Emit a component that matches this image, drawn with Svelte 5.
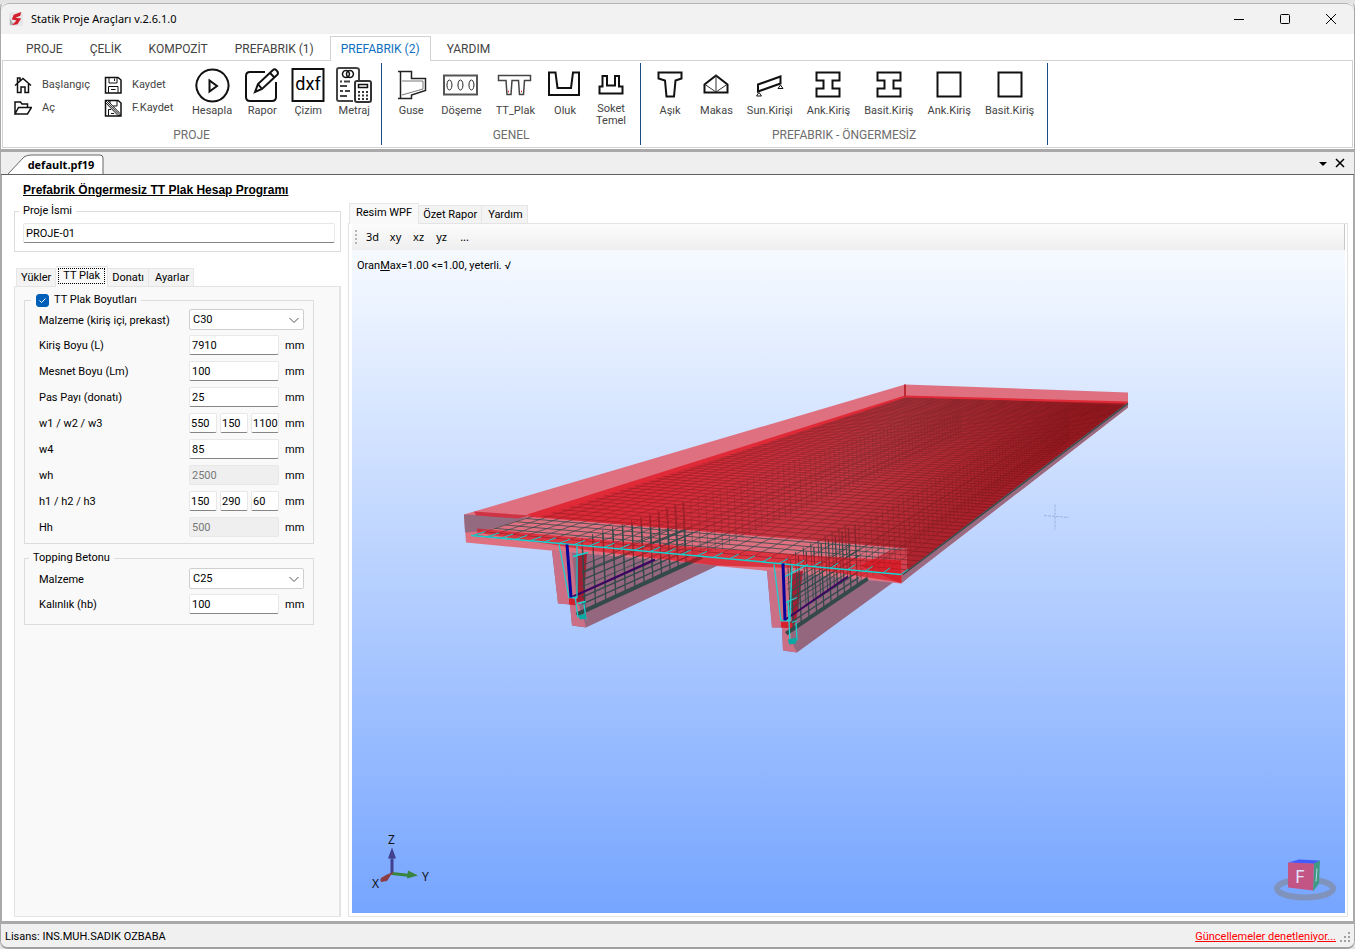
<script lang="ts">
  type Shape = { d: string; width?: number; color?: string; fill?: string };
  type Tool = { label: string; art: Shape[]; text?: string };
  type Point = [number, number];

  const beam = 'M6.5 5.5H29.5V13.5H22.5V21.5H29.5V29.5H6.5V21.5H13.5V13.5H6.5Z';
  const square = 'M6.5 5.5H29.5V29.5H6.5Z';

  const tabs = ['PROJE', 'ÇELİK', 'KOMPOZİT', 'PREFABRIK (1)', 'PREFABRIK (2)', 'YARDIM'];
  let activeTab = $state('PREFABRIK (2)');

  const fileTools: { label: string; art: Shape[] }[] = [
    {
      label: 'Başlangıç',
      art: [{ d: 'M1 9.5L9 2.5L17 9.5M3.5 8V16.5H7V11H11V16.5H14.5V8M3.5 7V2H6V4.5' }],
    },
    {
      label: 'Kaydet',
      art: [
        { d: 'M1.5 1.5H14L17 4V17H1.5Z' },
        { d: 'M5 1V7H13V1M10.5 2.5V5M4.5 17V10.5H14V17M7 13.5H11.5', width: 1 },
      ],
    },
    { label: 'Aç', art: [{ d: 'M1 15V3H6.5L8 5H13.5V8M1 15L4.5 8.5H17.5L13.5 15Z' }] },
    {
      label: 'F.Kaydet',
      art: [
        { d: 'M1.5 1.5H14L17 4V17H1.5Z' },
        { d: 'M6 1V5M13 1V7H9M4.5 17V10.5H7M14 12V17M7 14.5H10', width: 1 },
        { d: 'M1 3L3 1L16 14.5V16.5H14Z', width: 1, fill: '#fff' },
        { d: 'M2 2L15 15.5', width: 1 },
      ],
    },
  ];

  const groups: { name: string; tools: Tool[] }[] = [
    {
      name: 'PROJE',
      tools: [
        {
          label: 'Hesapla',
          art: [
            { d: 'M18.5 2.5A16 16 0 1 1 18.4 2.5Z', width: 2 },
            { d: 'M15.5 13.5V24.5L23 19Z', width: 2 },
          ],
        },
        {
          label: 'Rapor',
          art: [
            { d: 'M21 5H6Q2 5 2 9V30Q2 34 6 34H28Q32 34 32 30V15', width: 2 },
            { d: 'M11 25L14 17L29 3Q31 1 33 4Q35 6 33 8L18 22ZM14 17L18 22M26 6L30 10', width: 2 },
          ],
        },
        { label: 'Çizim', art: [{ d: 'M2.5 2H33.5V34H2.5Z', width: 2 }], text: 'dxf' },
        {
          label: 'Metraj',
          art: [
            { d: 'M17 34H3Q1 34 1 32V3Q1 1 3 1H20Q23 1 23 3V13', width: 2, color: '#444' },
            { d: 'M10 3.5A3.5 3.5 0 1 1 9.9 3.5M14 3.5A3.5 3.5 0 1 1 13.9 3.5', width: 1.5 },
            { d: 'M4 14.5H6M8 14.5H14M4 19H11M4 24H7M9 24H14M4 29H11', width: 2, color: '#444' },
            { d: 'M21 14H33Q35 14 35 16V33Q35 35 33 35H21Q19 35 19 33V16Q19 14 21 14Z', width: 2, color: '#333', fill: '#fff' },
            { d: 'M22.5 17.5H31.5V20.5H22.5Z', width: 1.5 },
            { d: 'M22 25H24M26 25H28M30 25H32M22 28.5H24M26 28.5H28M30 28.5H32M22 32H24M26 32H28M30 32H32', width: 2, color: '#333' },
          ],
        },
      ],
    },
    {
      name: 'GENEL',
      tools: [
        {
          label: 'Guse',
          art: [
            { d: 'M5 4.5H18.5V11.5H32.5V23.5L18.5 28V31.5H5M7.5 4.5V31.5', color: '#222' },
            { d: 'M9 14H30V22L9 28', width: 1, color: '#777' },
          ],
        },
        {
          label: 'Döşeme',
          art: [
            { d: 'M1 8.5H34V27.5H1Z', width: 2, color: '#555' },
            { d: 'M6.5 13A2.5 5 0 1 1 6.4 13M17.5 13A2.5 5 0 1 1 17.4 13M28.5 13A2.5 5 0 1 1 28.4 13', width: 1, color: '#222' },
          ],
        },
        {
          label: 'TT_Plak',
          art: [
            { d: 'M1.5 8.5H33.5V13.5H27.5L26.5 27.5H22.5L21.5 13.5H15L14 27.5H10L9 13.5H1.5Z', color: '#444' },
            { d: 'M11 24.5H12M24 24.5H25', color: '#e22' },
          ],
        },
        { label: 'Oluk', art: [{ d: 'M2 5.5H8.5L10.5 21H24L26 5.5H32V28H2Z', width: 2 }] },
        {
          label: 'Soket\nTemel',
          art: [{ d: 'M6.5 26.5V19.5H9.5V9H14V18.5H22V9H26V19.5H29.5V26.5Z', width: 2 }],
        },
      ],
    },
    {
      name: 'PREFABRIK - ÖNGERMESİZ',
      tools: [
        { label: 'Aşık', art: [{ d: 'M6.5 5.5H29.5V11.5L23.5 13.5L22 29.5H14.5L13 13.5L6.5 11.5Z', width: 2 }] },
        {
          label: 'Makas',
          art: [
            { d: 'M6.5 25.5V17.5L18 8.5L29.5 17.5V25.5Z', width: 2 },
            { d: 'M18 8V25M7 17.5L18 25L29 17.5', width: 1, color: '#333' },
          ],
        },
        {
          label: 'Sun.Kirişi',
          art: [
            { d: 'M6 17.5L28.5 9.5V16.5L6 24.5Z', width: 2 },
            { d: 'M7 25.5L4.5 29H9.5ZM28.5 18L26 21.5H31Z', width: 1 },
          ],
        },
        { label: 'Ank.Kiriş', art: [{ d: beam, width: 2 }] },
        { label: 'Basit.Kiriş', art: [{ d: beam, width: 2 }] },
        { label: 'Ank.Kiriş', art: [{ d: square, width: 2 }] },
        { label: 'Basit.Kiriş', art: [{ d: square, width: 2 }] },
      ],
    },
  ];

  const sizeRows = $state([
    { label: 'Kiriş Boyu (L)', values: ['7910'], disabled: false },
    { label: 'Mesnet Boyu (Lm)', values: ['100'], disabled: false },
    { label: 'Pas Payı (donatı)', values: ['25'], disabled: false },
    { label: 'w1 / w2 / w3', values: ['550', '150', '1100'], disabled: false },
    { label: 'w4', values: ['85'], disabled: false },
    { label: 'wh', values: ['2500'], disabled: true },
    { label: 'h1 / h2 / h3', values: ['150', '290', '60'], disabled: false },
    { label: 'Hh', values: ['500'], disabled: true },
  ]);

  let projectName = $state('PROJE-01');
  let sizesEnabled = $state(true);
  let toppingThickness = $state('100');

  // Perspective mapping of the unit square onto the reinforcement plane.
  const corners: Point[] = [[473, 535], [901, 574], [1126, 405], [906, 396]];

  function perspective([a, b, c, d]: Point[]) {
    const sx = a[0] - b[0] + c[0] - d[0];
    const sy = a[1] - b[1] + c[1] - d[1];
    const dx1 = b[0] - c[0];
    const dx2 = d[0] - c[0];
    const dy1 = b[1] - c[1];
    const dy2 = d[1] - c[1];
    const det = dx1 * dy2 - dx2 * dy1;
    const g = (sx * dy2 - dx2 * sy) / det;
    const h = (dx1 * sy - sx * dy1) / det;

    return (u: number, v: number) => {
      const w = g * u + h * v + 1;
      return {
        x: ((b[0] - a[0] + g * b[0]) * u + (d[0] - a[0] + h * d[0]) * v + a[0]) / w,
        y: ((b[1] - a[1] + g * b[1]) * u + (d[1] - a[1] + h * d[1]) * v + a[1]) / w,
        scale: 1 / (1 + 0.92 * v),
      };
    };
  }

  const project = perspective(corners);

  function line(u1: number, v1: number, u2: number, v2: number, drop = 0) {
    const p = project(u1, v1);
    const q = project(u2, v2);
    return `M${p.x.toFixed(1)} ${(p.y + drop * p.scale).toFixed(1)}L${q.x.toFixed(1)} ${(q.y + drop * q.scale).toFixed(1)}`;
  }

  const across = Array.from({ length: 80 }, (_, i) => line(0, i / 79, 1, i / 79)).join('');
  const along = Array.from({ length: 28 }, (_, i) => line(i / 27, 0, i / 27, 1)).join('');

  function stirrups(u: number, drop: number, from: number, to: number, step: number) {
    let path = '';
    for (let v = from; v <= to; v += step) {
      const p = project(u, v);
      path += `M${p.x.toFixed(1)} ${p.y.toFixed(1)}l${(3 * p.scale).toFixed(1)} ${(drop * p.scale).toFixed(1)}`;
    }
    for (const part of [0.45, 0.55, 0.8, 0.9]) {
      path += line(u, from, u, to, drop * part);
    }
    return path;
  }

  // Close stirrups are drawn heavier than those that fade out under the deck.
  const ribs = [
    { u: 0.26, near: 0.17 },
    { u: 0.752, near: 0.14 },
  ].map(({ u, near }) => ({
    near: stirrups(u, 70, 0.01, near, 0.0135),
    inner: stirrups(u - 0.02, 62, 0.02, near, 0.0135),
    far: stirrups(u, 70, near, 1, 0.0135),
    bar: line(u, 0.003, u, near + 0.02, 71),
  }));

  // Short ticks where the lengthwise bars pass the first crosswise bar.
  const ticks = Array.from({ length: 28 }, (_, i) => line(i / 27, 0, i / 27, 0.014)).join('');
</script>

{#snippet strokes(shapes: Shape[])}
  {#each shapes as shape}
    <path d={shape.d} fill={shape.fill ?? 'none'} stroke={shape.color ?? '#111'} stroke-width={shape.width ?? 1.5} />
  {/each}
{/snippet}

<div class="window">
  <header class="title-bar">
    <svg class="logo" viewBox="0 0 16 18" aria-hidden="true">
      <rect x="0" y="1" width="15" height="15" rx="3" fill="#e6e6e8" />
      <path d="M1 8L5 14L1 15Z" fill="#aaa" />
      <path d="M13 1L5 4L3 9L8 10L3 15L9 14L13 8L7 7L12 5Z" fill="#d3202c" />
    </svg>
    <h1>Statik Proje Araçları v.2.6.1.0</h1>
    <div class="window-buttons">
      <button type="button" aria-label="Minimize"><svg viewBox="0 0 12 12"><path d="M1 6.5H11" /></svg></button>
      <button type="button" aria-label="Maximize"><svg viewBox="0 0 12 12"><rect x="1.5" y="1.5" width="9" height="9" rx="1" /></svg></button>
      <button type="button" aria-label="Close"><svg viewBox="0 0 12 12"><path d="M1 1L11 11M11 1L1 11" /></svg></button>
    </div>
  </header>

  <nav class="ribbon-tabs">
    {#each tabs as tab}
      <button type="button" class:active={tab === activeTab} onclick={() => (activeTab = tab)}>{tab}</button>
    {/each}
  </nav>

  <div class="ribbon">
    {#each groups as group, index}
      <section class="group">
        <div class="tools">
          {#if index === 0}
            <div class="file-tools">
              {#each fileTools as tool}
                <button type="button">
                  <svg viewBox="0 0 18 18" aria-hidden="true">{@render strokes(tool.art)}</svg>
                  <span>{tool.label}</span>
                </button>
              {/each}
            </div>
          {/if}
          {#each group.tools as tool}
            <button type="button" class="tool">
              <svg class="tool-icon" viewBox="0 0 36 36" aria-hidden="true">
                {@render strokes(tool.art)}
                {#if tool.text}
                  <text x="18" y="23" text-anchor="middle" font-size="18">{tool.text}</text>
                {/if}
              </svg>
              <span class:double={tool.label.includes('\n')}>{tool.label}</span>
            </button>
          {/each}
        </div>
        <p>{group.name}</p>
      </section>
    {/each}
  </div>

  <div class="document-bar">
    <button type="button" class="document-tab">
      <svg viewBox="0 0 98 20" aria-hidden="true"><path d="M0 20L16 3Q19 1 23 1H92Q95 1 95 4V20" /></svg>
      <span>default.pf19</span>
    </button>
    <div class="document-buttons">
      <button type="button" aria-label="Open documents"><svg viewBox="0 0 10 10"><path d="M1 4H9L5 8Z" fill="#000" stroke="none" /></svg></button>
      <button type="button" aria-label="Close document"><svg viewBox="0 0 10 10"><path d="M1 1L9 9M9 1L1 9" /></svg></button>
    </div>
  </div>

  <main>
    <aside>
      <h2>Prefabrik Öngermesiz TT Plak Hesap Programı</h2>
      <fieldset class="project">
        <legend><label for="project-name">Proje İsmi</label></legend>
        <input id="project-name" type="text" bind:value={projectName} />
      </fieldset>

      <div class="page-tabs">
        <button type="button">Yükler</button>
        <button type="button" class="active focused"><span>TT Plak</span></button>
        <button type="button">Donatı</button>
        <button type="button">Ayarlar</button>
      </div>
      <div class="page">
        <fieldset class="sizes">
          <legend>
            <label class="check"><input type="checkbox" bind:checked={sizesEnabled} />
              <svg viewBox="0 0 13 13" aria-hidden="true"><path d="M3.5 6.5L5.5 8.5L9.5 4.5" /></svg>TT Plak Boyutları</label>
          </legend>
          <div class="row">
            <label for="material">Malzeme (kiriş içi, prekast)</label>
            <div class="select">
              <select id="material"><option>C30</option><option>C35</option></select>
              <svg viewBox="0 0 12 12" aria-hidden="true"><path d="M1.5 4L6 8.5L10.5 4" /></svg>
            </div>
          </div>
          {#each sizeRows as row, i}
            <div class="row">
              <label for={`size-${i}-0`}>{row.label}</label>
              <div class="fields" class:split={row.values.length > 1}>
                {#each row.values as _, j}
                  <input id={`size-${i}-${j}`} type="text" aria-label={row.label} disabled={row.disabled} bind:value={row.values[j]} />
                {/each}
              </div>
              <span>mm</span>
            </div>
          {/each}
        </fieldset>

        <fieldset class="topping">
          <legend>Topping Betonu</legend>
          <div class="row">
            <label for="topping-material">Malzeme</label>
            <div class="select">
              <select id="topping-material"><option>C25</option><option>C30</option></select>
              <svg viewBox="0 0 12 12" aria-hidden="true"><path d="M1.5 4L6 8.5L10.5 4" /></svg>
            </div>
          </div>
          <div class="row">
            <label for="topping-thickness">Kalınlık (hb)</label>
            <div class="fields"><input id="topping-thickness" type="text" bind:value={toppingThickness} /></div>
            <span>mm</span>
          </div>
        </fieldset>
      </div>
    </aside>

    <section class="preview">
      <div class="page-tabs">
        <button type="button" class="active">Resim WPF</button>
        <button type="button">Özet Rapor</button>
        <button type="button">Yardım</button>
      </div>
      <div class="preview-page">
        <div class="view-tools">
          <span class="grip" aria-hidden="true"></span>
          {#each ['3d', 'xy', 'xz', 'yz', '...'] as view}
            <button type="button">{view}</button>
          {/each}
        </div>
        <div class="viewport">
          <p>Oran<u>M</u>ax=1.00 &lt;=1.00, yeterli. √</p>
          <svg class="scene" viewBox="352 250 993 662" preserveAspectRatio="xMidYMid meet" aria-label="TT plak">
            <defs>
              <linearGradient id="deck" gradientUnits="userSpaceOnUse" x1="700" y1="430" x2="930" y2="610">
                <stop offset="0" stop-color="#d80a16" stop-opacity="0.68" />
                <stop offset="0.5" stop-color="#b81620" stop-opacity="0.64" />
                <stop offset="1" stop-color="#94070e" stop-opacity="0.8" />
              </linearGradient>
            </defs>

            <!-- concrete shell -->
            <path d="M464 514L905 384L1128 392V407L907 578L901 583L466 542Z" fill="#de7080" />
            <path d="M464 514L527 517L500 526L478 531L465 532Z" fill="#936a80" />
            <path d="M474 511L530 515L518 518L476 515Z" fill="#cf3444" />
            <path d="M552 550L558 603L570 604L572 625L586 627L718 565ZM767 570L772 627L782 627L783 650L797 652L893 582Z" fill="#94677f" />
            <path d="M552 550L558 603L570 604L572 625L586 627L583 616L577 600L572 552ZM767 570L772 627L782 627L783 650L797 652L791 640L790 572Z" fill="#cb6f87" />
            <path d="M576 555L587 552L584 600L577 602ZM791 574L803 570L796 622L792 627Z" fill="#a01f32" />
            <path d="M569 597L577 599L576 605L569 604ZM781 621L795 622L792 628L781 627Z" fill="#d4202f" />

            <!-- reinforcement -->
            <g fill="none" stroke="#33494a">
              <path d={across} stroke-width="0.8" />
              <path d={along} stroke-width="0.7" />
              {#each ribs as rib}
                <path d={rib.near} stroke-width="1.3" />
                <path d={rib.inner} stroke-width="0.9" />
                <path d={rib.far} stroke-width="0.7" stroke-opacity="0.75" />
                <path d={rib.bar} stroke-width="4" />
              {/each}
            </g>
            <path d="M571 597L655 559M784 620L848 576" stroke="#3d0462" stroke-width="2" />

            <!-- deck faces -->
            <path d="M527 516L905 396L1128 402L907 573V548Z" fill="url(#deck)" />
            <path d="M907 548L890 550L860 565L901 583L907 578Z" fill="#c8101c" fill-opacity="0.5" />
            <path d="M527 514L905 395L1128 401V403L905 397L537 517Z" fill="#e12a37" />
            <path d="M477 528L620 541L810 555L901 560V582L810 568L716 565L590 550L477 532Z" fill="#dc0c18" fill-opacity="0.6" />
            <path d="M901 583L907 578L1128 407V402L903 573Z" fill="#996a80" />
            <path d="M903 574L1128 403" stroke="#344b4a" stroke-width="1.5" />
            <path d="M905 384V396" stroke="#bd2836" stroke-width="2" />

            <!-- front bars -->
            <g fill="none" stroke="#18d2d0">
              <path d="M471 535L901 574" stroke-width="1.5" />
              <path d={ticks} stroke-width="1" />
              <path
                d="M559 544L569 597L577 597L577 545M575 596L578 617M584 603L586 619M573 556L588 552M578 603L586 601M774 564L781 620L790 620L792 565M788 600L790 642M796 622L797 640M785 576L808 564M786 602L797 597M792 622L797 620"
                stroke-width="1.3"
              />
            </g>
            <path d="M567 544L571 597M783 563L785 620" stroke="#09039b" stroke-width="3" />
            <path d="M578 615L586 613L586 618L580 619ZM788 639L797 637L796 643L789 644Z" fill="#0aa8a5" />

            <path d="M1044 515L1069 517M1055 504V529" stroke="#9fb2dc" stroke-width="1" stroke-dasharray="3 1" />

            <!-- axes -->
            <path d="M392 874V858" stroke="#423f8c" stroke-width="3" />
            <path d="M392 847L396 858H388Z" fill="#423f8c" />
            <path d="M392 873L410 875" stroke="#39843f" stroke-width="3" />
            <path d="M408 870L418 875L407 878Z" fill="#39843f" />
            <path d="M393 872L386 875L381 878V881L387 880L390 875Z" fill="#8c3d42" stroke="#8c3d42" />
            <g class="axis-names">
              <text x="388" y="843">Z</text>
              <text x="372" y="887">X</text>
              <text x="422" y="880">Y</text>
            </g>

            <!-- view cube -->
            <ellipse cx="1305" cy="888" rx="28" ry="9" fill="none" stroke="#7f93bd" stroke-width="6" />
            <path d="M1288 862L1299 859L1320 860L1314 863.5Z" fill="#405cff" />
            <path d="M1314 863L1320 860L1319 883L1313 891Z" fill="#409984" />
            <path d="M1288 862L1314 863L1313 890L1288 887Z" fill="#c25584" />
            <path d="M1317 868L1316 881" stroke="#b4d6e2" />
            <text class="cube-face" x="1295" y="882">F</text>
          </svg>
        </div>
      </div>
    </section>
  </main>

  <footer>
    <span>Lisans: INS.MUH.SADIK OZBABA</span>
    <a href="#updates">Güncellemeler denetleniyor...</a>
    <svg viewBox="0 0 12 12" aria-hidden="true"><path d="M9 1h2M5 5h2M9 5h2M1 9h2M5 9h2M9 9h2" /></svg>
  </footer>
</div>

<style>
  :global(body) {
    margin: 0;
    background: #e3e3e3;
  }

  .window {
    display: flex;
    flex-direction: column;
    box-sizing: border-box;
    min-height: 100vh;
    border: 1px solid #a9a9a9;
    border-top: 3px solid #e3e3e3;
    border-bottom: 2px solid #a0a0a0;
    border-radius: 8px;
    background: #fff;
    color: #000;
    font: 11px/14px Roboto, 'Liberation Sans', sans-serif;
    overflow: hidden;
  }

  button {
    border: 0;
    padding: 0;
    background: transparent;
    color: inherit;
    font: inherit;
  }

  h1,
  h2,
  p {
    margin: 0;
    font: inherit;
  }

  input,
  select {
    box-sizing: border-box;
    font: inherit;
    color: #000;
  }

  .title-bar {
    display: flex;
    align-items: center;
    height: 31px;
    border-top: 1px solid #b4b4b4;
    border-radius: 8px 8px 0 0;
    box-sizing: border-box;
    padding-left: 8px;
    background: #f2f2f2;
  }

  .logo {
    width: 15px;
    height: 17px;
    margin-right: 7px;
  }

  .title-bar h1 {
    flex: 1;
    font-family: 'Noto Sans', sans-serif;
    font-size: 11px;
  }

  .window-buttons {
    display: flex;
  }

  .window-buttons button {
    display: grid;
    place-items: center;
    width: 46px;
    height: 30px;
  }

  .window-buttons svg {
    width: 12px;
    height: 12px;
    fill: none;
    stroke: #000;
  }

  .ribbon-tabs {
    display: flex;
    gap: 5px;
    height: 26px;
    padding-left: 14px;
    font-size: 12px;
    color: #444;
  }

  .ribbon-tabs button {
    padding: 2px 10px 0;
    border: 1px solid transparent;
    border-bottom: 0;
  }

  .ribbon-tabs .active {
    position: relative;
    z-index: 1;
    margin: 2px 0 -1px;
    padding-top: 0;
    border-color: #d2d2d2;
    background: #fff;
    color: #0f6fc0;
  }

  .ribbon {
    display: flex;
    margin: 0 1px;
    border: 1px solid #d2d2d2;
    padding: 2px 0;
    color: #444;
  }

  .group {
    display: flex;
    flex-direction: column;
    align-items: center;
    border-right: 1px solid #1e4a86;
    padding: 4px 4px 2px 3px;
  }

  .group + .group {
    padding: 4px 6px 2px;
  }

  .group p {
    color: #6d6d6d;
    font-size: 12px;
    line-height: 16px;
  }

  .tools {
    display: flex;
    flex: 1;
    height: 59px;
  }

  .file-tools {
    display: grid;
    grid-template-columns: 90px 82px;
    grid-template-rows: 23px 23px;
    padding: 6px 0 0 8px;
  }

  .file-tools button {
    display: flex;
    align-items: center;
    gap: 10px;
  }

  .file-tools svg {
    width: 18px;
    height: 18px;
  }

  .tool {
    display: flex;
    flex-direction: column;
    align-items: center;
    padding: 0 5px;
  }

  .file-tools + .tool {
    padding-left: 4px;
  }

  .tool-icon {
    width: 36px;
    height: 36px;
    flex: none;
  }

  .tool span {
    padding: 0 2px;
    line-height: 16px;
    white-space: pre-line;
  }

  .tool .double {
    line-height: 12px;
  }

  .document-bar {
    display: flex;
    justify-content: space-between;
    height: 22px;
    border-top: 3px solid #a9a9a9;
    border-bottom: 1px solid #606060;
    margin-top: 1px;
    padding: 0 9px 0 7px;
    background: #efefef;
  }

  .document-tab {
    position: relative;
    width: 98px;
    margin: 2px 0 -1px;
    padding-left: 8px;
    font: bold 11px/18px 'Open Sans', sans-serif;
  }

  .document-tab svg {
    position: absolute;
    inset: 0;
    fill: #fff;
    stroke: #666;
  }

  .document-tab span {
    position: relative;
  }

  .document-buttons {
    display: flex;
    gap: 7px;
  }

  .document-buttons svg {
    display: block;
    width: 10px;
    height: 10px;
    stroke: #000;
    stroke-width: 1.5;
  }

  main {
    display: flex;
    flex: 1;
    gap: 7px;
    padding: 8px 5px 4px 12px;
    border: solid #a9a9a9;
    border-width: 0 1px 3px 1px;
  }

  aside {
    display: flex;
    flex-direction: column;
    flex: 0 0 327px;
  }

  h2 {
    padding-left: 9px;
    font-family: 'Liberation Sans', sans-serif;
    font-size: 12px;
    font-weight: bold;
    text-decoration: underline;
    white-space: nowrap;
  }

  fieldset {
    min-width: 0;
    margin: 0;
    border: 1px solid #dcdcdc;
  }

  legend {
    margin-left: -4px;
    padding: 0 4px;
    line-height: 14px;
  }

  .project {
    margin-top: 7px;
    padding: 5px 5px 8px 8px;
  }

  .project input {
    width: 100%;
  }

  input[type='text'] {
    min-width: 0;
    height: 20px;
    border: 1px solid #e8e8e8;
    border-bottom-color: #858585;
    border-radius: 2px;
    padding: 0 2px;
    background: #fff;
  }

  input[type='text']:disabled {
    border-color: #e8e8e8;
    background: #efefef;
    color: #777;
  }

  .page-tabs {
    display: flex;
    align-items: flex-end;
    height: 20px;
    padding-left: 1px;
  }

  aside .page-tabs {
    margin-top: 14px;
    padding-left: 2px;
  }

  .page-tabs button {
    height: 18px;
    border: 1px solid #e6e6e6;
    border-bottom: 0;
    padding: 0 4px;
    background: #f3f3f3;
  }

  .page-tabs button + button {
    border-left: 0;
  }

  .page-tabs button:last-child {
    padding-left: 6px;
  }

  .page-tabs .active {
    position: relative;
    z-index: 1;
    height: 21px;
    margin-bottom: -1px;
    padding: 0 6px 3px;
    background: #f9f9f9;
  }

  .page-tabs .focused {
    padding: 0 2px 3px;
  }

  .focused span {
    display: block;
    border: 1px dotted #000;
    padding: 0 4px;
  }

  .page {
    flex: 1;
    border: 1px solid #e4e4e4;
    border-right-width: 2px;
    padding: 6px 25px 6px 9px;
    background: #f9f9f9;
  }

  .sizes {
    display: grid;
    gap: 6px;
    padding: 2px 4px 6px 14px;
  }

  .sizes legend {
    margin-left: -8px;
  }

  .check {
    display: flex;
    align-items: center;
    position: relative;
  }

  .check input {
    appearance: none;
    width: 13px;
    height: 13px;
    margin: 0 5px 0 1px;
    border: 1px solid #005fb8;
    border-radius: 3px;
    background: #fff;
  }

  .check input:checked {
    background: #005fb8;
  }

  .check svg {
    position: absolute;
    left: 1px;
    width: 13px;
    height: 13px;
    fill: none;
    stroke: #fff;
    pointer-events: none;
  }

  .row {
    display: grid;
    grid-template-columns: 144px 90px 1fr;
    column-gap: 6px;
    align-items: center;
    height: 20px;
  }

  .row label,
  .row > span {
    padding-top: 2px;
  }

  .fields {
    display: flex;
    gap: 3px;
  }

  .fields input {
    flex: 1;
    width: 0;
  }

  .split input[type='text'] {
    padding: 0 0 0 1px;
  }

  .select {
    position: relative;
    grid-column: 2 / 4;
  }

  .select select {
    appearance: none;
    display: block;
    width: 115px;
    height: 21px;
    border: 1px solid #cfcfcf;
    border-radius: 2px;
    padding: 0 3px;
    background: #fff;
  }

  .select svg {
    position: absolute;
    top: 5px;
    left: 99px;
    width: 12px;
    height: 12px;
    fill: none;
    stroke: #555;
    pointer-events: none;
  }

  .topping {
    display: grid;
    gap: 6px;
    margin-top: 7px;
    padding: 3px 4px 10px 14px;
  }

  .topping legend {
    margin-left: -10px;
  }

  .preview {
    display: flex;
    flex: 1;
    flex-direction: column;
    min-width: 0;
    padding-top: 20px;
  }

  .preview-page {
    display: flex;
    flex: 1;
    flex-direction: column;
    border: 1px solid #e4e4e4;
    padding: 0 2px 3px 3px;
  }

  .view-tools {
    display: flex;
    align-items: center;
    height: 26px;
    padding-left: 3px;
    border-right: 1px solid #c8c8c8;
    background: linear-gradient(#fcfcfc, #efefef);
    font: 11px/14px 'Noto Sans', sans-serif;
  }

  .view-tools button {
    min-width: 23px;
    padding: 0 5px;
  }

  .grip {
    width: 2px;
    height: 14px;
    margin-right: 4px;
    background: repeating-linear-gradient(#b5b5b5 0 2px, transparent 2px 4px);
  }

  .viewport {
    display: grid;
    flex: 1;
    position: relative;
    min-height: 0;
    background: linear-gradient(#f6faff, #76a5ff);
  }

  .viewport p {
    position: absolute;
    top: 9px;
    left: 5px;
  }

  .scene {
    display: block;
    width: 100%;
    height: 100%;
  }

  .scene text {
    font: 12px 'Noto Sans', sans-serif;
    fill: #111;
  }

  .scene .cube-face {
    font-size: 18px;
    fill: #dfe1fa;
  }

  footer {
    display: flex;
    align-items: center;
    box-sizing: border-box;
    height: 23px;
    padding: 2px 3px 0 4px;
    background: #f0f0f0;
  }

  footer a {
    margin-left: auto;
    color: #f00;
  }

  footer svg {
    width: 12px;
    height: 12px;
    margin: 2px 0 0 3px;
    stroke: #a0a0a0;
    stroke-width: 2;
  }
</style>
